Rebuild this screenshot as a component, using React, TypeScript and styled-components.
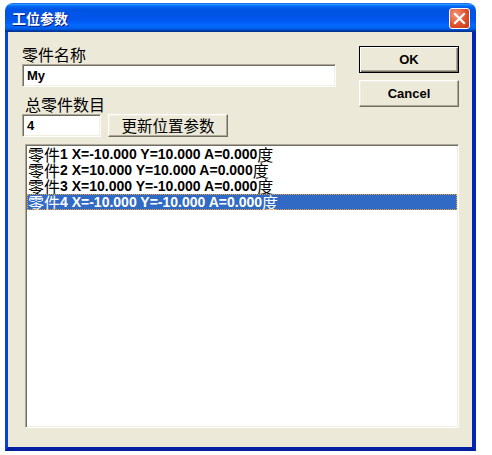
import React from 'react'
import styled, { createGlobalStyle } from 'styled-components'

const GlobalStyle = createGlobalStyle`
  html, body {
    margin: 0;
    padding: 0;
    background: #ffffff;
  }
  * {
    box-sizing: border-box;
  }
`

const cjk = `"Noto Sans CJK SC", "Noto Sans", sans-serif`
const latin = `"Liberation Sans", "Noto Sans CJK SC", sans-serif`

const Window = styled.div`
  margin: 3px 0 0 5px;
  width: 471px;
  height: 448px;
  display: flex;
  flex-direction: column;
`

const TitleBar = styled.div`
  height: 29px;
  flex: none;
  display: flex;
  align-items: center;
  justify-content: space-between;
  padding: 1px 6px 0 7px;
  border-radius: 8px 8px 0 0;
  background: linear-gradient(
    to bottom,
    #0058ee 0%,
    #3593ff 4%,
    #288eff 6%,
    #127dff 8%,
    #036ffc 10%,
    #0262ee 14%,
    #0057e5 20%,
    #0054e3 24%,
    #0055eb 56%,
    #005bf5 66%,
    #026afe 76%,
    #0062ef 86%,
    #0052d6 92%,
    #0040ab 94%,
    #003092 100%
  );
`

const Title = styled.span`
  font-family: ${cjk};
  font-weight: 700;
  font-size: 14px;
  color: #ffffff;
  text-shadow: 1px 1px 0 #0a1883;
`

const CloseButton = styled.div`
  width: 21px;
  height: 21px;
  border: 1px solid #ffffff;
  border-radius: 3px;
  background: radial-gradient(circle at 30% 30%, #f39a7c 0%, #e0512c 55%, #c23a15 100%);
  display: flex;
  align-items: center;
  justify-content: center;
`

const Body = styled.div`
  flex: 1;
  display: flex;
  flex-direction: column;
  background: #ece9d8;
  border-left: 3px solid #0841d8;
  border-right: 4px solid #0026b8;
  border-bottom: 4px solid #001ea0;
  padding: 12px 13px 19px 14px;
`

const TopRow = styled.div`
  display: flex;
  justify-content: space-between;
`

const Fields = styled.div`
  width: 314px;
  display: flex;
  flex-direction: column;
`

const Label = styled.div<{ $indent?: number; $gap?: number }>`
  font-family: ${cjk};
  font-size: 16px;
  line-height: 20px;
  color: #000000;
  margin-left: ${({ $indent }) => $indent ?? 0}px;
  margin-top: ${({ $gap }) => $gap ?? 0}px;
`

const sunken = `
  border: 1px solid;
  border-color: #aca899 #ffffff #ffffff #aca899;
  box-shadow: inset 1px 1px 0 #716f64, inset -1px -1px 0 #f1efe2;
`

const TextBox = styled.div<{ $width: number }>`
  ${sunken}
  width: ${({ $width }) => $width}px;
  height: 23px;
  background: #ffffff;
  padding: 0 4px;
  display: flex;
  align-items: center;
  font-family: ${latin};
  font-weight: 700;
  font-size: 13px;
  color: #000000;
`

const CountRow = styled.div`
  display: flex;
  gap: 7px;
`

const Button = styled.div<{ $default?: boolean; $width: number; $height: number }>`
  width: ${({ $width }) => $width}px;
  height: ${({ $height }) => $height}px;
  display: flex;
  align-items: center;
  justify-content: center;
  background: #ece9d8;
  color: #000000;
  border: 1px solid;
  border-color: ${({ $default }) => ($default ? '#000000' : '#ffffff #716f64 #716f64 #ffffff')};
  box-shadow: ${({ $default }) =>
    $default
      ? 'inset 1px 1px 0 #ffffff, inset -1px -1px 0 #716f64, inset -2px -2px 0 #aca899'
      : 'inset -1px -1px 0 #aca899, inset 1px 1px 0 #f1efe2'};
`

const ButtonText = styled.span<{ $cjk?: boolean }>`
  font-family: ${({ $cjk }) => ($cjk ? cjk : latin)};
  font-weight: ${({ $cjk }) => ($cjk ? 400 : 700)};
  font-size: ${({ $cjk }) => ($cjk ? '15.5px' : '13px')};
  line-height: 1;
`

const Actions = styled.div`
  display: flex;
  flex-direction: column;
  gap: 7px;
  margin-top: 2px;
`

const ListBox = styled.div`
  ${sunken}
  flex: 1;
  margin: 7px 0 0 3px;
  background: #ffffff;
  padding: 1px;
  display: flex;
  flex-direction: column;
`

const Row = styled.div<{ $selected?: boolean }>`
  height: 16px;
  display: flex;
  align-items: center;
  white-space: nowrap;
  padding-left: 1px;
  color: ${({ $selected }) => ($selected ? '#ffffff' : '#000000')};
  background: ${({ $selected }) => ($selected ? '#316ac5' : 'transparent')};
  outline: ${({ $selected }) => ($selected ? '1px dotted #e8a33c' : 'none')};
  outline-offset: -1px;
`

const Han = styled.span`
  display: inline-block;
  height: 16px;
  font-family: ${cjk};
  font-size: 16px;
  font-weight: 400;
  line-height: 16px;
`

const Coords = styled.span`
  display: inline-block;
  height: 16px;
  font-family: ${latin};
  font-size: 14px;
  font-weight: 700;
  line-height: 16px;
`

const parts = [
  { n: 1, x: '-10.000', y: '10.000', a: '0.000' },
  { n: 2, x: '10.000', y: '10.000', a: '0.000' },
  { n: 3, x: '10.000', y: '-10.000', a: '0.000' },
  { n: 4, x: '-10.000', y: '-10.000', a: '0.000' },
]

const App: React.FC = () => {
  const selected = 4

  return (
    <>
      <GlobalStyle />
      <Window>
        <TitleBar>
          <Title>工位参数</Title>
          <CloseButton>
            <svg width="13" height="13" viewBox="0 0 13 13">
              <path d="M2 2 L11 11 M11 2 L2 11" stroke="#ffffff" strokeWidth="2.2" strokeLinecap="square" />
            </svg>
          </CloseButton>
        </TitleBar>
        <Body>
          <TopRow>
            <Fields>
              <Label>零件名称</Label>
              <TextBox $width={314}>My</TextBox>
              <Label $indent={3} $gap={7}>总零件数目</Label>
              <CountRow>
                <TextBox $width={79}>4</TextBox>
                <Button $width={120} $height={23}>
                  <ButtonText $cjk>更新位置参数</ButtonText>
                </Button>
              </CountRow>
            </Fields>
            <Actions>
              <Button $default $width={100} $height={27}>
                <ButtonText>OK</ButtonText>
              </Button>
              <Button $width={100} $height={27}>
                <ButtonText>Cancel</ButtonText>
              </Button>
            </Actions>
          </TopRow>
          <ListBox>
            {parts.map((p) => (
              <Row key={p.n} $selected={p.n === selected}>
                <Han>零件</Han>
                <Coords>{`${p.n} X=${p.x} Y=${p.y} A=${p.a}`}</Coords>
                <Han>度</Han>
              </Row>
            ))}
          </ListBox>
        </Body>
      </Window>
    </>
  )
}

export default App
